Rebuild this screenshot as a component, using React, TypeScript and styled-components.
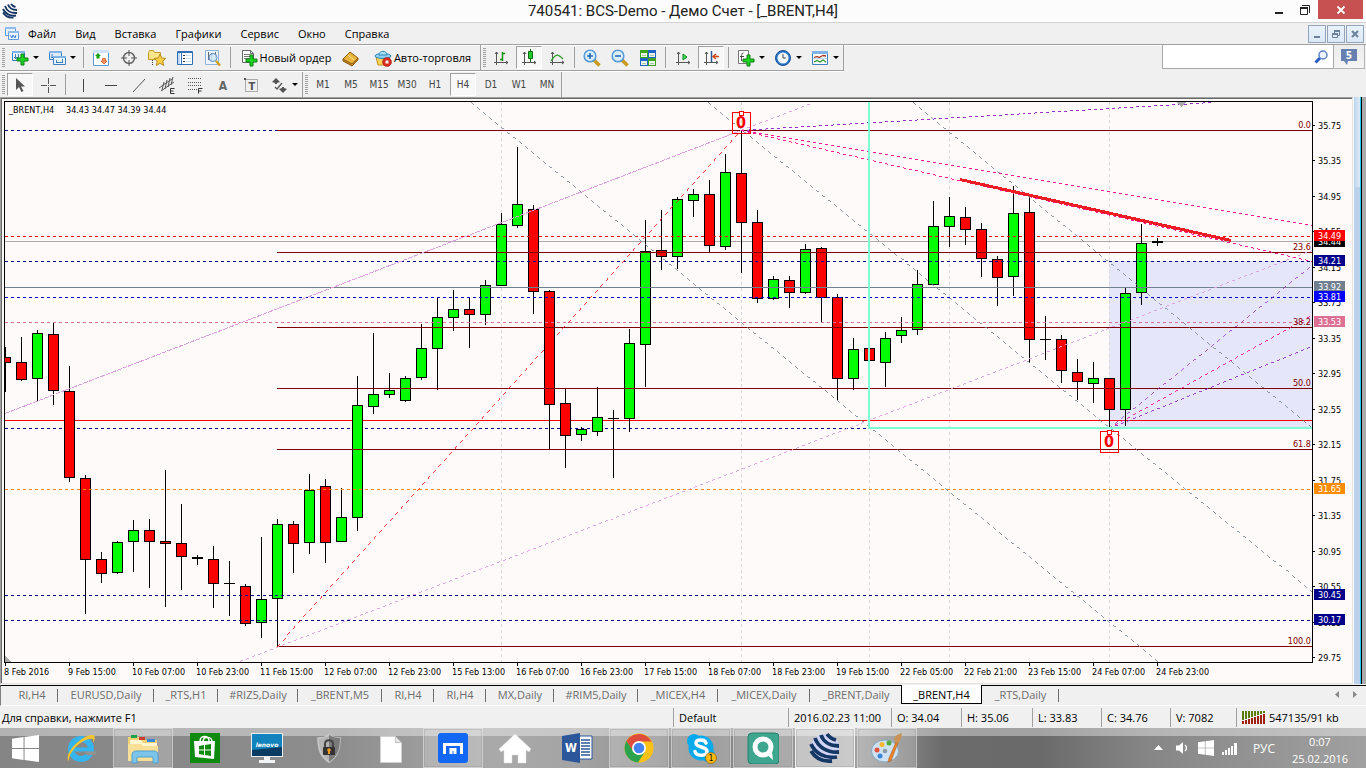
import React from 'react';
import styled, { createGlobalStyle, css } from 'styled-components';

const uiFont = '"Open Sans", "Noto Sans", sans-serif';
const titleFont = 'Roboto, "Open Sans", sans-serif';
const smallFont = '"DejaVu Sans Condensed", "DejaVu Sans", sans-serif';

const GlobalStyle = createGlobalStyle`
  * { box-sizing: border-box; }
  body { margin: 0; background: #f0f0f0; font-family: ${uiFont}; font-size: 11px; color: #000; }
  button, input { font: inherit; color: inherit; border: 0; padding: 0; margin: 0; background: none; border-radius: 0; }
  svg { display: block; flex: none; }
`;

/* ---------- chart data ---------- */

type Kind = 'u' | 'd' | 'x';
type Candle = [Kind, number, number, number, number];

const LEFT = 5;
const TOP = 102;
const STEP = 16;

/* kind, high, body top, body bottom, low */
const candles: Candle[] = [
  ['d', 347, 357, 363, 392], ['d', 337, 362, 380, 381], ['u', 330, 333, 379, 401], ['d', 323, 334, 391, 405],
  ['d', 366, 391, 478, 482], ['d', 475, 478, 560, 614], ['d', 552, 559, 574, 583], ['u', 541, 542, 573, 574],
  ['u', 520, 530, 542, 572], ['d', 519, 530, 542, 588], ['d', 470, 541, 544, 607], ['d', 504, 543, 557, 590],
  ['x', 555, 557, 559, 565], ['d', 546, 559, 584, 608], ['x', 561, 583, 584, 616], ['d', 584, 586, 624, 626],
  ['u', 537, 599, 623, 638], ['u', 519, 524, 599, 646], ['d', 521, 524, 544, 573], ['u', 474, 490, 543, 554],
  ['d', 479, 486, 543, 563], ['u', 488, 517, 542, 542], ['u', 376, 405, 518, 531], ['u', 333, 394, 407, 414],
  ['u', 373, 390, 395, 398], ['u', 376, 378, 401, 402], ['u', 324, 348, 378, 380], ['u', 298, 317, 349, 390],
  ['u', 290, 309, 318, 331], ['d', 297, 309, 315, 348], ['u', 280, 285, 315, 325], ['u', 213, 224, 286, 286],
  ['u', 147, 204, 226, 228], ['d', 205, 209, 292, 314], ['d', 290, 291, 405, 449], ['d', 389, 403, 436, 468],
  ['u', 427, 429, 435, 441], ['u', 387, 417, 432, 436], ['x', 410, 418, 419, 478], ['u', 329, 343, 419, 432],
  ['u', 220, 251, 345, 387], ['d', 210, 250, 257, 270], ['u', 197, 199, 257, 269], ['u', 189, 194, 201, 217],
  ['d', 180, 194, 246, 252], ['u', 154, 172, 247, 250], ['d', 131, 173, 223, 273], ['d', 210, 222, 299, 303],
  ['u', 276, 279, 299, 300], ['d', 276, 280, 293, 308], ['u', 244, 249, 293, 294], ['d', 247, 248, 298, 322],
  ['d', 294, 297, 379, 400], ['u', 338, 349, 379, 390], ['d', 348, 348, 361, 361], ['u', 332, 338, 363, 387],
  ['u', 317, 330, 336, 343], ['u', 270, 284, 330, 335], ['u', 201, 226, 285, 285], ['u', 197, 216, 227, 247],
  ['d', 207, 217, 230, 245], ['d', 223, 229, 259, 277], ['d', 256, 259, 278, 306], ['u', 186, 213, 277, 296],
  ['d', 196, 212, 340, 363], ['x', 316, 339, 340, 360], ['d', 335, 339, 371, 383], ['d', 359, 372, 382, 400],
  ['u', 362, 378, 384, 403], ['d', 378, 378, 410, 427], ['u', 288, 293, 410, 426], ['u', 224, 243, 293, 305],
  ['x', 238, 241, 243, 246],
];

const fibs: [number, string][] = [
  [130, '0.0'], [252, '23.6'], [327, '38.2'], [388, '50.0'], [449, '61.8'], [646, '100.0'],
];

const levels: [number, string][] = [
  [236, '#ff0000'], [261, '#00008b'], [297, '#0000cd'], [322, '#db7093'],
  [489, '#ff8c00'], [595, '#00008b'], [620, '#00008b'],
];

/* x1, y1, x2, y2, colour, dash length */
const rays: [number, number, number, number, string, number][] = [
  [240, 661, 1312, 250, '#dda0dd', 3.2],
  [741, 130, 811, 103, '#dda0dd', 3.2],
  [277, 646, 741, 130, '#ff0000', 4.03],
  [471, 102, 1158, 661, '#708090', 3.87],
  [708, 102, 1312, 591, '#708090', 3.87],
  [913, 102, 1312, 427, '#708090', 3.87],
  [741, 130, 1212, 102, '#9932cc', 3],
  [741, 130, 1312, 225, '#ff1493', 3.04],
  [741, 130, 1312, 261, '#ff1493', 3.08],
  [1109, 428, 1312, 265, '#9932cc', 3.85],
  [1109, 428, 1312, 315, '#ff1493', 3.43],
  [1109, 428, 1312, 346, '#9932cc', 3.24],
];

const priceTicks = Array.from({ length: 16 }, (_, i) => ({
  y: Math.round(125 + i * 35.47),
  label: (35.75 - i * 0.4).toFixed(2),
}));

const priceTags: [number, string, string][] = [
  [242, '#000000', '34.44'], [236, '#ff0000', '34.49'], [261, '#00008b', '34.21'], [287, '#708090', '33.92'],
  [297, '#0000ff', '33.81'], [322, '#db7093', '33.53'], [489, '#ff8c00', '31.65'], [595, '#00008b', '30.45'],
  [620, '#00008b', '30.17'],
];

const times = [
  '8 Feb 2016', '9 Feb 15:00', '10 Feb 07:00', '10 Feb 23:00', '11 Feb 15:00', '12 Feb 07:00', '12 Feb 23:00',
  '15 Feb 13:00', '16 Feb 07:00', '16 Feb 23:00', '17 Feb 15:00', '18 Feb 07:00', '18 Feb 23:00', '19 Feb 15:00',
  '22 Feb 05:00', '22 Feb 21:00', '23 Feb 15:00', '24 Feb 07:00', '24 Feb 23:00',
];

const tabs: [string, number][] = [
  ['RI,H4', 52], ['EURUSD,Daily', 96], ['_RTS,H1', 64], ['#RIZ5,Daily', 80], ['_BRENT,M5', 84], ['RI,H4', 52],
  ['RI,H4', 52], ['MX,Daily', 68], ['#RIM5,Daily', 84], ['_MICEX,H4', 80], ['_MICEX,Daily', 92],
  ['_BRENT,Daily', 92], ['_BRENT,H4', 80], ['_RTS,Daily', 77],
];
const ACTIVE_TAB = 12;

/* ---------- layout ---------- */

const Page = styled.div`
  display: flex;
  flex-direction: column;
  min-height: 100vh;
  background: #f0f0f0;
`;

const TitleBar = styled.header`
  display: grid;
  grid-template-columns: 1fr auto 1fr;
  height: 23px;
  background: #fcfcfc;
  border-bottom: 1px solid #d2d2d2;
`;

const TitleIcon = styled.div`
  padding: 3px 0 0 2px;
`;

const Title = styled.h1`
  margin: 0;
  font-family: ${titleFont};
  font-size: 15px;
  font-weight: 400;
  line-height: 23px;
  color: #222;
`;

const WindowButtons = styled.div`
  display: flex;
  justify-content: flex-end;
  padding-right: 3px;
`;

const WindowButton = styled.button<{ $close?: boolean }>`
  display: flex;
  align-items: center;
  justify-content: center;
  width: ${p => (p.$close ? 45 : 26)}px;
  height: 19px;
  color: ${p => (p.$close ? '#fff' : '#222')};
  background: ${p => (p.$close ? '#c75050' : 'transparent')};
`;

const MenuBar = styled.nav`
  display: flex;
  align-items: center;
  height: 22px;
  padding: 0 2px 0 5px;
  border-bottom: 1px solid #a0a0a0;
  box-shadow: 0 1px 0 #fff;
`;

const MenuItems = styled.div`
  display: flex;
  flex: 1;
  gap: 19px;
  padding-left: 9px;
`;

const MenuItem = styled.button`
  line-height: 18px;
`;

const MdiButtons = styled.div`
  display: flex;
  gap: 1px;
`;

const MdiButton = styled.button`
  display: flex;
  align-items: center;
  justify-content: center;
  width: 18px;
  height: 18px;
  background: linear-gradient(#e9f2fc, #dbe8f7);
  border: 1px solid #93a5bb;
`;

const ToolRow = styled.div<{ $first?: boolean }>`
  display: flex;
  align-items: flex-start;
  height: ${p => (p.$first ? 27 : 25)}px;
`;

const Toolbar = styled.div<{ $ruled?: boolean }>`
  display: flex;
  align-items: center;
  height: ${p => (p.$ruled ? 26 : 25)}px;
  border-right: 1px solid #a0a0a0;
  ${p => p.$ruled && css`border-bottom: 1px solid #a0a0a0; box-shadow: 0 1px 0 #fff;`}
`;

const Grip = styled.i`
  width: 3px;
  height: 20px;
  margin: 0 1px 0 2px;
  background: repeating-linear-gradient(#a0a0a0 0 1px, #f0f0f0 1px 2px);
`;

const Rule = styled.i`
  width: 1px;
  height: 21px;
  margin: 0 3px;
  background: #a0a0a0;
`;

const ToolButton = styled.button<{ $w?: number; $pressed?: boolean }>`
  display: flex;
  align-items: center;
  justify-content: center;
  gap: ${p => (p.$w ? 2 : 0)}px;
  width: ${p => p.$w ?? 28}px;
  height: 23px;
  white-space: nowrap;
  ${p => p.$pressed && css`
    width: 26px;
    margin: 0 1px;
    background: #f8f8f8;
    border: 1px solid;
    border-color: #a0a0a0 #fff #fff #a0a0a0;
  `}
`;

const FrameButton = styled(ToolButton)`
  font-family: ${smallFont};
  font-size: 10px;
  color: #444;
`;

const Caret = styled.i`
  border: 3px solid transparent;
  border-top-color: #000;
  border-bottom: 0;
  margin-left: 2px;
`;

const Search = styled.label`
  display: flex;
  align-items: center;
  width: 172px;
  height: 24px;
  margin-left: auto;
  padding-right: 5px;
  background: #fff;
  border: solid #a8a8a8;
  border-width: 0 1px 1px 1px;
`;

const SearchInput = styled.input`
  flex: 1;
  min-width: 0;
  padding: 0 4px;
  outline: 0;
`;

const MessageButton = styled.button`
  display: flex;
  align-items: center;
  justify-content: center;
  width: 31px;
  height: 24px;
  margin-right: 1px;
  background: linear-gradient(#ececec, #f4f4f4);
  border: solid #b5b5b5;
  border-width: 0 1px 1px 0;
`;

const Workspace = styled.main`
  display: flex;
  flex: 1;
  min-height: 300px;
`;

const Frame = styled.section`
  display: flex;
  flex: 1;
  flex-direction: column;
  min-width: 0;
  background: #fffafa;
  border: 1px solid #a0a0a0;
  border-right-color: #e3e3e3;
  border-bottom-color: #e3e3e3;
`;

const FrameInner = styled.div`
  display: flex;
  flex: 1;
  flex-direction: column;
  padding: 2px 0 0 2px;
  border: solid #696969;
  border-width: 1px 0 0 1px;
`;

const PlotRow = styled.div`
  display: flex;
  flex: 1;
`;

const Plot = styled.div`
  display: flex;
  flex: 1;
  min-width: 0;
  overflow: hidden;
  border: 1px solid #000;
`;

const PriceAxis = styled.div`
  width: 39px;

  svg { overflow: visible; }
`;

const TimeAxis = styled.div`
  height: 20px;
  overflow: hidden;
`;

const EdgeStrip = styled.div`
  width: 13px;
  background: linear-gradient(90deg, #fff 0 1px, #b9d1ea 1px 7px, #28c8f0 7px 8px, #000 8px 9px, #ababab 9px);
`;

const EdgeThumb = styled.div`
  width: 5px;
  height: 90px;
  margin-left: 2px;
  background: linear-gradient(90deg, #c3daf2, #dce9f8);
`;

const TabBar = styled.nav`
  display: flex;
  height: 21px;
  margin-top: 1px;
  padding-left: 5px;
  border-top: 1px solid #000;
  border-bottom: 1px solid #fff;
  border-left: 1px solid #808080;
`;

const Tab = styled.button<{ $w: number; $active: boolean }>`
  display: flex;
  justify-content: center;
  width: ${p => p.$w}px;
  height: 18px;
  line-height: 18px;
  color: #6d6d6d;
  white-space: nowrap;
  background: linear-gradient(#6d6d6d, #6d6d6d) right 3px / 1px 13px no-repeat;
  ${p => p.$active && css`
    color: #000;
    height: 19px;
    margin: -1px 0 0 -1px;
    width: ${p.$w + 1}px;
    line-height: 20px;
    background: #fff;
    border: solid #000;
    border-width: 0 1px 1px 1px;
  `}
`;

const TabArrows = styled.div`
  display: flex;
  gap: 13px;
  margin-left: auto;
  padding: 5px 8px 0 0;
`;

const StatusBar = styled.footer`
  display: flex;
  align-items: center;
  height: 22px;
  padding-top: 1px;
  padding-left: 2px;
`;

const StatusCell = styled.div<{ $w?: number }>`
  display: flex;
  align-items: center;
  gap: 4px;
  height: 19px;
  white-space: nowrap;
  ${p => (p.$w ? css`width: ${p.$w}px; padding-left: 5px; border-left: 1px solid #a0a0a0;` : css`flex: 1;`)}
`;

const Taskbar = styled.footer`
  display: flex;
  height: 40px;
  background:
    linear-gradient(rgba(255, 255, 255, 0.38) 0 8px, transparent 8px),
    linear-gradient(90deg, #858585 0, #8d8d8d 25%, #a9a9a9 36%, #a4a4a4 42%, #858585 52%, #a0a0a0 63%, #6b6b6b 69%, #6a6a6a 76%, #868686 84%, #a0a0a0 100%);
`;

const TaskButton = styled.button<{ $open?: boolean; $active?: boolean; $start?: boolean }>`
  display: flex;
  align-items: center;
  justify-content: center;
  width: ${p => (p.$start ? 50 : p.$open ? 60 : 62)}px;
  margin: ${p => (p.$open ? '0 1px' : '0')};
  height: 40px;
  ${p => p.$open && css`
    background: rgba(255, 255, 255, 0.22);
    border: 1px solid rgba(225, 225, 225, 0.55);
    box-shadow: inset 0 0 0 1px rgba(130, 130, 130, 0.25);
  `}
  ${p => p.$active && css`
    background: rgba(255, 255, 255, 0.45);
    border-color: #f2f2f2;
  `}
`;

const Tray = styled.div`
  display: flex;
  align-items: center;
  margin-left: auto;
  padding-right: 17px;
  color: #fff;
`;

const TrayItem = styled.button<{ $w: number }>`
  display: flex;
  justify-content: center;
  width: ${p => p.$w}px;
  font-size: 12px;
`;

const Clock = styled.time`
  width: 58px;
  margin-left: 5px;
  padding-top: 3px;
  line-height: 17px;
  text-align: center;
  white-space: nowrap;
`;

/* ---------- small icons ---------- */

const Plus = ({ x, y }: { x: number; y: number }) => (
  <path
    transform={`translate(${x} ${y})`}
    d="M4 0h3v4h4v3H7v4H4V7H0V4h4z"
    fill="#1fd61f"
    stroke="#0a7d12"
  />
);

const Axes = () => (
  <path d="M4.500 3v13M2 13.500h14M3 5l1.500-2L6 5M14 12l2 1.500-2 1.500" fill="none" stroke="#555" />
);

const icons: Record<string, React.ReactNode> = {
  newChart: <><path d="M1.500 2.500h12v9h-12z" fill="#eaf4ff" stroke="#3f7fbf" /><path d="M1 2h13v2H1z" fill="#7fb2e6" /><path d="M4.500 5v5M3 8.500h5M7.500 5v3" stroke="#3f7fbf" /><Plus x={6} y={5} /></>,
  profiles: <><path d="M1.500 2.500h12v8h-12z" fill="#dcecfb" stroke="#3f7fbf" /><path d="M1 2h13v2H1z" fill="#7fb2e6" /><path d="M5.500 7.500h12v8h-12z" fill="#eaf4ff" stroke="#3f7fbf" /><path d="M5 7h13v2H5z" fill="#7fb2e6" /><path d="M4 5v4M3 8.500h2M8 13.500h7M8.500 11v3M14.500 10v4" stroke="#3f7fbf" /></>,
  market: <><path d="M1.500 1.500h15v15h-15z" fill="#fff" stroke="#5a9bd5" /><path d="M1 1h16v3H1z" fill="#cfe4fa" /><path d="M6 4l3 3H7.500v2.500h-3V7H3z" fill="#12a012" /><path d="M12 15l-3-3h1.500V9.500h3V12H15z" fill="#f9905a" stroke="#d8501c" strokeWidth=".7" /></>,
  crosshair: <><circle cx="9" cy="9" r="5.500" fill="none" stroke="#666" strokeWidth="1.500" /><path d="M9 1v6M9 11v6M1 9h6M11 9h6" stroke="#555" /></>,
  navigator: <><path d="M.5 3.500l1-2h4l1 2h6v7H.5z" fill="#fbe58a" stroke="#c39a2b" /><path d="M4.500 11v5" stroke="#444" strokeDasharray="1 1" /><path d="M12 5l1.800 4 4 .4-3 2.800.9 4.300-3.700-2.200-3.700 2.200.9-4.300-3-2.800 4-.4z" fill="#f9cf45" stroke="#b98d1c" /></>,
  terminal: <><rect x="1" y="2" width="16" height="14" rx="1" fill="#2f6fb5" /><path d="M6 4h10v11H6z" fill="#fff" /><path d="M2 4h2v11H2z" fill="#bcd8f5" /><path d="M4.500 4v11" stroke="#fff" /><path d="M7 6.500h2M7 9.500h2M7 12.500h2" stroke="#333" /><path d="M10 6.500h5M10 9.500h5M10 12.500h5" stroke="#cfe0f2" /></>,
  tester: <><path d="M1.500 1.500h13v14h-13z" fill="#eef6fd" stroke="#8eb4d8" /><path d="M4.500 3v8M7.500 4v7M11.500 3v6" stroke="#667" /><circle cx="9" cy="8.500" r="4" fill="#cfe8fa" fillOpacity=".85" stroke="#5a8fc0" /><path d="M12 12l4 4.500" stroke="#d7a022" strokeWidth="2.500" /></>,
  order: <><path d="M2.500 1.500h8l3 3v9h-11z" fill="#fff" stroke="#666" /><path d="M4 5.500h6M4 7.500h7M4 9.500h5" stroke="#777" /><path d="M10.500 1.500v3h3" fill="none" stroke="#666" /><Plus x={6} y={6} /></>,
  book: <><path d="M1 10l7-7 8 6-6 7z" fill="#e9b53c" stroke="#8c5c12" /><path d="M1 10v2l9 5 6-6V9l-6 6z" fill="#c98b25" stroke="#8c5c12" /><path d="M6 6l6 5" stroke="#fbe19a" /></>,
  auto: <><path d="M2 8l2 8h9l3-8z" fill="#f8d55a" stroke="#c09020" /><ellipse cx="9" cy="7" rx="8" ry="2.500" fill="#8ccff0" stroke="#2f86b5" /><path d="M5 6c0-5 8-5 8 0z" fill="#a8ddf6" stroke="#2f86b5" /><circle cx="13" cy="13" r="4.500" fill="#d8291c" stroke="#9a140c" strokeWidth=".5" /><path d="M11.500 11.500h3v3h-3z" fill="#fff" /></>,
  bars: <><Axes /><path d="M10.500 3v9M8 10.500h2M11 4.500h2" stroke="#159015" strokeWidth="1.500" /></>,
  candle: <><Axes /><path d="M10.500 0v13" stroke="#0a6d0a" /><path d="M8.500 2.500h4v7h-4z" fill="#22cc33" stroke="#0a6d0a" /></>,
  line: <><Axes /><path d="M3 12c5-8 7-7 12-2" fill="none" stroke="#2a9a2a" strokeWidth="1.300" /></>,
  zoomIn: <><path d="M11 11l5.500 5.500" stroke="#c99a22" strokeWidth="3.500" /><circle cx="7" cy="7" r="5.800" fill="#d9effc" stroke="#5b9bd5" strokeWidth="1.600" /><path d="M7 4v6M4 7h6" stroke="#2268b8" strokeWidth="1.600" /></>,
  zoomOut: <><path d="M11 11l5.500 5.500" stroke="#c99a22" strokeWidth="3.500" /><circle cx="7" cy="7" r="5.800" fill="#d9effc" stroke="#5b9bd5" strokeWidth="1.600" /><path d="M4 7h6" stroke="#2268b8" strokeWidth="1.600" /></>,
  tile: <><path d="M1 1h8v8H1zM9 9h8v8H9z" fill="#3da31c" /><path d="M9 1h8v8H9zM1 9h8v8H1z" fill="#1e63c8" /><path d="M2 4h6v4H2zM10 4h6v4h-6zM2 12h6v4H2zM10 12h6v4h-6z" fill="#e8f3ea" /><path d="M3 6.500h4M11 6.500h4M3 14.500h4M11 14.500h4" stroke="#a8c8a8" /></>,
  scroll: <><Axes /><path d="M9 5l4 3-4 3z" fill="#3ddc4e" stroke="#0c8a1a" /></>,
  shift: <><Axes /><path d="M9.500 2v11" stroke="#2a5b9a" strokeWidth="1.500" /><path d="M17 7.500h-5M14 5l-3 2.500 3 2.500" fill="none" stroke="#d0491c" strokeWidth="1.500" /></>,
  indicators: <><path d="M1.500 1.500h10v13h-10z" fill="#fff" stroke="#777" /><path d="M6.500 4c-2 0-2 1-2 8M3 7.500h4" fill="none" stroke="#444" /><Plus x={6} y={6} /></>,
  periods: <><circle cx="9" cy="9" r="7.500" fill="#2a78c8" stroke="#174f94" /><circle cx="9" cy="9" r="5.500" fill="#f3f8fd" /><path d="M9 5v4h3" fill="none" stroke="#444" /></>,
  templates: <><path d="M1.500 2.500h15v13h-15z" fill="#fff" stroke="#3f7fbf" /><path d="M1 2h16v3H1z" fill="#7fb2e6" /><path d="M3 8.500l3-1 2 1 4-2 3 .5" fill="none" stroke="#a33620" strokeWidth="1.300" /><path d="M3 13l3-1.500 3 1.500 3-2 3 2" fill="none" stroke="#2f9a2f" strokeWidth="1.300" /><path d="M2 9.500h14" stroke="#b8d4ee" /></>,
  cursor: <path d="M5 2v12l3-3 2.500 5 2-1L10 10.500h4z" fill="#555" />,
  cross: <path d="M9.500 2v6M9.500 11v6M2 9.500h6M11 9.500h6M9 9.500h1" stroke="#555" />,
  vline: <path d="M9.500 3v13" stroke="#444" />,
  hline: <path d="M3 9.500h12" stroke="#444" />,
  trend: <path d="M3 16L15 3" stroke="#555" />,
  channel: <><path d="M1 12L14 3M3 15L16 6M4 14L6 6M7 13L9 4M10 11l2-9M13 9l2-8" fill="none" stroke="#555" /><path d="M16.500 12.500h-4v5h4M12.500 15h3" fill="none" stroke="#333" /></>,
  fib: <><path d="M2 2.500h14M2 6.500h14M2 9.500h14M2 13.500h9" stroke="#555" strokeDasharray="1 1" /><path d="M16.500 12.500h-4v5M12.500 15h3" fill="none" stroke="#333" /></>,
  textA: <text x="9" y="14" textAnchor="middle" fontFamily={smallFont} fontSize="12" fontWeight="700" fill="#666">A</text>,
  label: <><path d="M3.500 3.500h12v12h-12z" fill="none" stroke="#666" strokeDasharray="1 1" /><path d="M2 2h2v2H2z" fill="#555" /><text x="10" y="14" textAnchor="middle" fontFamily={smallFont} fontSize="11" fontWeight="700" fill="#555">T</text></>,
  shapes: <><path d="M2 6l4-4 4 4-3 1v1H5V7z" fill="#555" /><path d="M9 13l3-1v-1h2v1l3 1-4 4z" fill="#555" /><path d="M5 11l2 2 5-6" fill="none" stroke="#555" strokeWidth="1.200" /></>,
};

const Icon = ({ name }: { name: string }) => (
  <svg width="18" height="18" viewBox="0 0 18 18" aria-hidden="true">{icons[name]}</svg>
);

const Globe = ({ size, pale }: { size: number; pale?: boolean }) => (
  <svg width={size} height={size} viewBox="0 0 32 32" aria-hidden="true">
    {pale && <circle cx="16" cy="16" r="14" fill="#d3d5f7" />}
    <g fill="none" stroke="#143764" strokeWidth="3.800">
      <path d="M12 3c2 6 8 11 18 11" />
      <path d="M6 6c3 9 12 15 24 14" />
      <path d="M2 12c4 9 14 15 26 13" />
      <path d="M2 19c5 8 12 11 21 10" />
      <path d="M18 2c2 3 5 5 9 6" />
    </g>
  </svg>
);

/* ---------- taskbar pictures ---------- */

const WinLogo = ({ size }: { size: number }) => (
  <svg width={size} height={size} viewBox="0 0 28 28" aria-hidden="true">
    <path d="M0 4l12-2v11.500H0zM13 2l15-2v13.500H13zM0 14.500h12V26L0 24zM13 14.500h15V28l-15-2z" fill="#fff" />
  </svg>
);

const taskIcons: { name: string; open?: boolean; active?: boolean; art: React.ReactNode }[] = [
  { name: 'Internet Explorer', art: <><circle cx="16" cy="17" r="10" fill="none" stroke="#35b4ee" strokeWidth="6" /><path d="M8 17.500h19" stroke="#35b4ee" strokeWidth="4" /><path d="M19 19.500h12v3l-9 1z" fill="#939393" /><path d="M4 29C-2 24 14 4 27 3c4 0 3 5 1 8 1-4 0-5-4-4C14 9 3 22 4 29z" fill="#f8c52c" /></> },
  { name: 'Explorer', open: true, art: <><path d="M1 5h12l2 3h15v21H1z" fill="#f3d373" /><path d="M4 3h6v3H4z" fill="#22a04a" /><path d="M12 5h6v3h-6z" fill="#c8402c" /><path d="M20 7h8v3h-8z" fill="#3a86d8" /><path d="M3 8h11l2 3h14v4H3z" fill="#fff6d0" /><path d="M1 12h13l2 2h15v15H1z" fill="#f7e096" /><path d="M5 31v-8c0-3 2-4 4-4h18c2 0 4 1 4 4v8h-5v-6H10v6z" fill="#7cc4ea" stroke="#4fa0cf" /></> },
  { name: 'Store', art: <><path d="M1 1h30v30H1z" fill="#0e8a0e" /><path d="M11 9c0-6 9-6 9 0M14 9c1-5 9-5 9 1" fill="none" stroke="#fff" strokeWidth="1.500" /><path d="M5 9h21l-1 18-19-2z" fill="#fff" /><path d="M10 14l5-1v4.500h-5zM16 13l6-1v5.500h-6zM10 18.500h5V23l-5-1zM16 18.500h6V24l-6-1z" fill="#0e8a0e" /></> },
  { name: 'Lenovo', art: <><path d="M0 1h32v24H0z" fill="#e9eef2" /><path d="M1 2h30v17H1z" fill="#1283bd" /><path d="M1 18l30-3v9H1z" fill="#083c63" /><text x="16" y="15" textAnchor="middle" fontFamily='"DejaVu Sans", sans-serif' fontSize="6" fontWeight="700" fontStyle="italic" fill="#fff">lenovo</text><path d="M13 25h6v3h5v3H8v-3h5z" fill="#f1f3f4" /></> },
  { name: 'Security', art: <><path d="M16 3c3 2 7 3 11 3 0 12-3 19-11 24C8 25 5 18 5 6c4 0 8-1 11-3z" fill="#b4b4b4" stroke="#c9c9c9" strokeWidth="1.500" /><path d="M16 3c3 2 7 3 11 3 0 12-3 19-11 24z" fill="#7a7a7a" /><path d="M12 15v-3c0-5 8-5 8 0v3" fill="none" stroke="#444" strokeWidth="2" /><rect x="10" y="15" width="12" height="8" rx="1" fill="#333" /><circle cx="16" cy="18" r="1.800" fill="#f59a23" /><path d="M15 18h2v4h-2z" fill="#f59a23" /></> },
  { name: 'Document', art: <><path d="M5.500 4.500h15l6 6v20h-21z" fill="#fff" stroke="#d0d0d0" /><path d="M20.500 4.500v6h6z" fill="#e8e8e8" stroke="#c4c4c4" /></> },
  { name: 'Maxthon', open: true, art: <><rect x="1" y="1" width="30" height="30" rx="3" fill="#1267f5" /><path d="M7.500 22V12.500h17V22M14 22v-4.500h4V22" fill="none" stroke="#fff" strokeWidth="3" /></> },
  { name: 'Home', art: <path d="M16 2L0 17l2 3 3-2v13h8v-8h6v8h8V18l3 2 2-3z" fill="#fff" stroke="#ddd" strokeWidth=".5" /> },
  { name: 'Word', art: <><path d="M16 4h15v23H16z" fill="#fff" stroke="#2b579a" /><path d="M20 8h9M20 11h9M20 14h9M20 17h9M20 20h9M20 23h9" stroke="#2b579a" strokeWidth="1.300" /><path d="M1 4l18-3v30L1 28z" fill="#2b579a" /><text x="10" y="20" textAnchor="middle" fontFamily='"DejaVu Sans Condensed", sans-serif' fontSize="12" fontWeight="700" fill="#fff">W</text></> },
  { name: 'Chrome', open: true, art: <><circle cx="16" cy="16" r="14.500" fill="#fbc116" /><path d="M3.500 8.700A14.500 14.500 0 0 0 15 30.500l7-11-12-1z" fill="#2ba24c" /><path d="M3.500 8.700A14.500 14.500 0 0 1 28.500 9.500H16L10 19z" fill="#de4c3c" /><circle cx="16" cy="16" r="7" fill="#fff" /><circle cx="16" cy="16" r="5.300" fill="#4382f0" /></> },
  { name: 'Skype', open: true, art: <><circle cx="16" cy="16" r="12.500" fill="#06aaec" /><circle cx="9" cy="9" r="7" fill="#06aaec" /><circle cx="23" cy="23" r="7" fill="#06aaec" /><path d="M21 11c-1-4-10-4-10 0 0 5 11 3 11 8.500 0 5-11 5-12 0" fill="none" stroke="#fff" strokeWidth="3.500" strokeLinecap="round" /><circle cx="26" cy="26" r="5.500" fill="#fdb813" stroke="#8a6408" strokeWidth=".7" /><text x="26" y="29" textAnchor="middle" fontFamily={smallFont} fontSize="8" fill="#000">1</text></> },
  { name: 'QIP', open: true, art: <><rect x="1" y="1" width="31" height="31" rx="4" fill="#3ea58f" stroke="#25806c" /><circle cx="16" cy="15" r="8" fill="none" stroke="#fff" strokeWidth="5" /><path d="M17 20h8l1 8z" fill="#fff" /></> },
  { name: 'MetaTrader', open: true, active: true, art: null },
  { name: 'Paint', open: true, art: <><ellipse cx="14" cy="19" rx="13.500" ry="11" fill="#cfe2f2" stroke="#88a9c4" /><circle cx="6" cy="18" r="2.500" fill="#e0523c" /><circle cx="11" cy="12.500" r="2.500" fill="#f5b52c" /><circle cx="18" cy="11" r="2.500" fill="#52ab3c" /><circle cx="9" cy="24" r="2.500" fill="#3a86d8" /><circle cx="14" cy="19" r="2.300" fill="#8c9aa6" /><path d="M25 10l2 1-7 18-3 1 1-4z" fill="#e8842c" stroke="#a8561a" strokeWidth=".5" /><path d="M24 10c-2-4 0-7 7-9-1 6-2 9-4 10z" fill="#c99258" /></> },
];

/* ---------- chart ---------- */

const Marker = ({ x, y }: { x: number; y: number }) => (
  <g>
    <rect x={x - 8.5} y={y + 1.5} width="18" height="21" fill="none" stroke="#ff0000" shapeRendering="crispEdges" />
    <text x={x} y={y + 17} textAnchor="middle" fontFamily='"DejaVu Sans Condensed", sans-serif' fontSize="16" fontWeight="700" fill="#ff0000">0</text>
    <rect x={x - 1.5} y={y + 0.5} width="4" height="4" fill="#fff" stroke="#ff0000" shapeRendering="crispEdges" />
  </g>
);

const bodyFill = { u: '#00ff00', d: '#ff0000', x: '#000000' };

const CandleShape = ({ index, candle }: { index: number; candle: Candle }) => {
  const [kind, high, top, bottom, low] = candle;
  const x = LEFT + index * STEP;
  return (
    <g shapeRendering="crispEdges">
      <rect x={x} y={high} width="1" height={low - high} />
      <rect x={x - 5} y={top} width="11" height={bottom - top} />
      {kind !== 'x' && (
        <rect x={x - 4} y={top + 1} width="9" height={bottom - top - 2} fill={bodyFill[kind]} />
      )}
    </g>
  );
};

/* stroke width that covers one pixel per column (or row) on a slanted line */
const hairline = (dx: number, dy: number) =>
  Math.max(Math.abs(dx), Math.abs(dy)) / Math.hypot(dx, dy);

const Chart = () => (
  <svg width="100%" height="100%" role="img" aria-label="_BRENT,H4">
    <g transform={`translate(${-LEFT} ${-TOP})`} shapeRendering="crispEdges">
      <rect x="1109" y="261" width="3000" height="167" fill="#e6e6fa" />
      {[501, 741, 869, 949, 1109].map(x => (
        <line key={x} x1={x + 0.5} x2={x + 0.5} y1={TOP} y2="3000" stroke="#d9d9d9" strokeDasharray="3 3" />
      ))}
      <line x1={LEFT} x2="4000" y1="241.5" y2="241.5" stroke="#b0a8a8" />
      <line x1={LEFT} x2="4000" y1="420.5" y2="420.5" stroke="#ff0000" />
      <line x1={LEFT} x2="868" y1="428.5" y2="428.5" stroke="#00008b" strokeDasharray="3 3" />
      {candles.map((c, i) => <CandleShape key={i} index={i} candle={c} />)}
      <line x1={LEFT} x2="277" y1="130.5" y2="130.5" stroke="#00008b" strokeDasharray="3 3" />
      {levels.map(([y, color]) => (
        <line key={y} x1={LEFT} x2="4000" y1={y + 0.5} y2={y + 0.5} stroke={color} strokeDasharray="3 3" />
      ))}
      <line x1={LEFT} x2="4000" y1="287.5" y2="287.5" stroke="#708090" />
      {fibs.map(([y]) => (
        <line key={y} x1="277" x2="4000" y1={y + 0.5} y2={y + 0.5} stroke="#800000" />
      ))}
      <line x1={LEFT} y1="413.500" x2="741" y2="130.500" stroke="#dda0dd" strokeDasharray="5 1" />
      {rays.map(([x1, y1, x2, y2, color, dash], i) => (
        <line
          key={i}
          x1={x1}
          y1={y1 + 0.5}
          x2={x2}
          y2={y2 + 0.5}
          stroke={color}
          strokeWidth={hairline(x2 - x1, y2 - y1)}
          strokeDasharray={`${dash} ${dash}`}
        />
      ))}
      <path d="M869 102V428H4000" fill="none" stroke="#7fffd4" strokeWidth="2" />
      <line x1="960" y1="179.500" x2="1231" y2="240.500" stroke="#ed1c24" strokeWidth="3" />
      <path d="M1176 102h10l-5 5z" fill="#a9a9a9" />
      <path d="M5 656v6h6z" fill="#a9a9a9" />
      <Marker x={741} y={111} />
      <Marker x={1109} y={430} />
    </g>
    <g fontFamily={smallFont} fontSize="9">
      <text x="4" y="11">_BRENT,H4</text>
      <text x="61" y="11">34.43 34.47 34.39 34.44</text>
      {fibs.map(([y, label]) => (
        <text key={label} x="100%" dx="-1" y={y - TOP - 2} textAnchor="end" fill="#800000">{label}</text>
      ))}
    </g>
  </svg>
);

const PriceScale = () => (
  <svg width="39" height="100%" fontFamily={smallFont} fontSize="9">
    {priceTicks.map(t => (
      <g key={t.label}>
        <rect x="0" y={t.y - TOP + 1} width="2" height="1" />
        <text x="5" y={t.y - TOP + 5}>{t.label}</text>
      </g>
    ))}
    {priceTags.map(([y, color, label]) => (
      <g key={label}>
        <rect x="1" y={y - TOP - 5} width="31" height="11" fill={color} />
        <text x="5" y={y - TOP + 4} fill="#fff">{label}</text>
      </g>
    ))}
  </svg>
);

const TimeScale = () => (
  <svg width="100%" height="20" fontFamily={smallFont} fontSize="9">
    {times.map((t, i) => (
      <g key={t}>
        <rect x={1 + i * 64} y="0" width="1" height="3" />
        <text x={i * 64} y="12">{t}</text>
      </g>
    ))}
  </svg>
);

const SmallTool = ({ name, label, pressed }: { name: string; label: string; pressed?: boolean }) => (
  <ToolButton $pressed={pressed} aria-label={label}><Icon name={name} /></ToolButton>
);

const DropTool = ({ name, label }: { name: string; label: string }) => (
  <ToolButton $w={37} aria-label={label}><Icon name={name} /><Caret /></ToolButton>
);

export default function App() {
  return (
    <>
      <GlobalStyle />
      <Page>
        <TitleBar>
          <TitleIcon><Globe size={16} /></TitleIcon>
          <Title>740541: BCS-Demo - Демо Счет - [_BRENT,H4]</Title>
          <WindowButtons>
            <WindowButton aria-label="Свернуть">
              <svg width="10" height="12"><path d="M1 8h8v2H1z" fill="#222" /></svg>
            </WindowButton>
            <WindowButton aria-label="Восстановить">
              <svg width="12" height="12"><path d="M1.500 3.500h7v7h-7zM3 1.500h7.500V9" fill="none" stroke="#222" /><path d="M1 3h8v2H1z" fill="#222" /></svg>
            </WindowButton>
            <WindowButton $close aria-label="Закрыть">
              <svg width="10" height="10"><path d="M1.500 1.500l7 7M8.500 1.500l-7 7" stroke="#fff" strokeWidth="1.800" /></svg>
            </WindowButton>
          </WindowButtons>
        </TitleBar>

        <MenuBar>
          <svg width="14" height="15" aria-hidden="true">
            <path d="M.5 1.500h10v8H.5z" fill="#e6f1fd" stroke="#5b9ae0" />
            <path d="M3.500 5.500h10v8h-10z" fill="#eef6ff" stroke="#5b9ae0" />
            <path d="M0 1h11v2H0zM3 5h11v2H3z" fill="#8dbcf0" />
            <path d="M5 9l2 3 1-3 2 3 1-3" fill="none" stroke="#3f7fd0" />
          </svg>
          <MenuItems>
            {['Файл', 'Вид', 'Вставка', 'Графики', 'Сервис', 'Окно', 'Справка'].map(m => (
              <MenuItem key={m}>{m}</MenuItem>
            ))}
          </MenuItems>
          <MdiButtons>
            <MdiButton aria-label="Свернуть окно"><svg width="10" height="10"><path d="M2 7h6v2H2z" fill="#6d8097" /></svg></MdiButton>
            <MdiButton aria-label="Восстановить окно"><svg width="10" height="10"><path d="M1.500 4.500h5v4h-5zM3.500 4V1.500h5v5H7" fill="none" stroke="#6d8097" /><path d="M1 4h6v2H1zM3 1h6v2H3z" fill="#6d8097" /></svg></MdiButton>
            <MdiButton aria-label="Закрыть окно"><svg width="10" height="10"><path d="M2 2l6 6M8 2L2 8" stroke="#6d8097" strokeWidth="2" /></svg></MdiButton>
          </MdiButtons>
        </MenuBar>

        <ToolRow $first>
          <Toolbar $ruled>
            <Grip />
            <DropTool name="newChart" label="Новый график" />
            <DropTool name="profiles" label="Профили" />
            <Rule />
            <SmallTool name="market" label="Обзор рынка" />
            <SmallTool name="crosshair" label="Окно данных" />
            <SmallTool name="navigator" label="Навигатор" />
            <SmallTool name="terminal" label="Терминал" />
            <SmallTool name="tester" label="Тестер" />
            <Rule />
            <ToolButton $w={103}><Icon name="order" />Новый ордер</ToolButton>
            <SmallTool name="book" label="Редактор" />
            <ToolButton $w={115}><Icon name="auto" />Авто-торговля</ToolButton>
          </Toolbar>
          <Toolbar $ruled>
            <Grip />
            <SmallTool name="bars" label="Бары" />
            <SmallTool name="candle" label="Свечи" pressed />
            <SmallTool name="line" label="Линия" />
            <Rule />
            <SmallTool name="zoomIn" label="Приблизить" />
            <SmallTool name="zoomOut" label="Отдалить" />
            <SmallTool name="tile" label="Плитка" />
            <Rule />
            <SmallTool name="scroll" label="Автопрокрутка" />
            <SmallTool name="shift" label="Сдвиг" pressed />
            <Rule />
            <DropTool name="indicators" label="Индикаторы" />
            <DropTool name="periods" label="Периоды" />
            <DropTool name="templates" label="Шаблоны" />
          </Toolbar>
          <Search>
            <SearchInput type="text" aria-label="Поиск" />
            <svg width="14" height="14" aria-hidden="true">
              <path d="M6 8L1.500 12.500" stroke="#2a5ac8" strokeWidth="3" />
              <circle cx="9" cy="5" r="4" fill="#eef4fd" stroke="#5a82c8" strokeWidth="1.500" />
            </svg>
          </Search>
          <MessageButton aria-label="Сообщения">
            <svg width="16" height="16">
              <path d="M0 0h16v12H7l-1 4-3-4H0z" fill="#6580b0" />
              <text x="8" y="10" textAnchor="middle" fontFamily={smallFont} fontSize="10" fontWeight="700" fill="#fff">5</text>
            </svg>
          </MessageButton>
        </ToolRow>

        <ToolRow>
          <Toolbar>
            <Grip />
            <SmallTool name="cursor" label="Курсор" pressed />
            <SmallTool name="cross" label="Перекрестие" />
            <Rule />
            <SmallTool name="vline" label="Вертикальная линия" />
            <SmallTool name="hline" label="Горизонтальная линия" />
            <SmallTool name="trend" label="Трендовая линия" />
            <SmallTool name="channel" label="Канал" />
            <SmallTool name="fib" label="Фибоначчи" />
            <SmallTool name="textA" label="Текст" />
            <SmallTool name="label" label="Метка" />
            <DropTool name="shapes" label="Стрелки" />
          </Toolbar>
          <Toolbar>
            <Grip />
            {['M1', 'M5', 'M15', 'M30', 'H1', 'H4', 'D1', 'W1', 'MN'].map(f => (
              <FrameButton key={f} $pressed={f === 'H4'}>{f}</FrameButton>
            ))}
          </Toolbar>
        </ToolRow>

        <Workspace>
          <Frame>
            <FrameInner>
              <PlotRow>
                <Plot><Chart /></Plot>
                <PriceAxis><PriceScale /></PriceAxis>
              </PlotRow>
              <TimeAxis><TimeScale /></TimeAxis>
            </FrameInner>
          </Frame>
          <EdgeStrip><EdgeThumb /></EdgeStrip>
        </Workspace>

        <TabBar>
          {tabs.map(([label, w], i) => (
            <Tab key={i} $w={w} $active={i === ACTIVE_TAB}>{label}</Tab>
          ))}
          <TabArrows>
            <svg width="5" height="8"><path d="M4 0v7L0 3.500z" fill="#8a8a8a" /></svg>
            <svg width="5" height="8"><path d="M0 0v7l4-3.500z" fill="#8a8a8a" /></svg>
          </TabArrows>
        </TabBar>

        <StatusBar>
          <StatusCell>Для справки, нажмите F1</StatusCell>
          <StatusCell $w={115}>Default</StatusCell>
          <StatusCell $w={103}>2016.02.23 11:00</StatusCell>
          <StatusCell $w={70}>O: 34.04</StatusCell>
          <StatusCell $w={71}>H: 35.06</StatusCell>
          <StatusCell $w={69}>L: 33.83</StatusCell>
          <StatusCell $w={69}>C: 34.76</StatusCell>
          <StatusCell $w={66}>V: 7082</StatusCell>
          <StatusCell $w={130}>
            <svg width="23" height="14" shapeRendering="crispEdges" aria-hidden="true">
              {Array.from({ length: 8 }, (_, i) => (
                <g key={i}>
                  <rect x={i * 3} y="0" width="2" height={9 - i} fill="#5a7d0a" />
                  <rect x={i * 3} y={10 - i} width="2" height={3 + i} fill="#a02010" />
                </g>
              ))}
            </svg>
            547135/91 kb
          </StatusCell>
        </StatusBar>

        <Taskbar>
          <TaskButton $start aria-label="Пуск"><WinLogo size={27} /></TaskButton>
          {taskIcons.map(t => (
            <TaskButton key={t.name} $open={t.open} $active={t.active} aria-label={t.name}>
              {t.art ? <svg width="32" height="32" viewBox="0 0 32 32">{t.art}</svg> : <Globe size={32} pale />}
            </TaskButton>
          ))}
          <Tray>
            <TrayItem $w={24} aria-label="Скрытые значки"><svg width="9" height="6"><path d="M0 5l4.500-5L9 5z" fill="#fff" /></svg></TrayItem>
            <TrayItem $w={24} aria-label="Громкость">
              <svg width="14" height="14"><path d="M1 4.500h3L8 1v12L4 9.500H1z" fill="#fff" /><path d="M10 4c2 2 2 4 0 6" fill="none" stroke="#fff" strokeWidth="1.300" /></svg>
            </TrayItem>
            <TrayItem $w={24} aria-label="Windows"><WinLogo size={16} /></TrayItem>
            <TrayItem $w={24} aria-label="Сеть">
              <svg width="16" height="13"><path d="M0 10h2v3H0zM3 8h2v5H3zM6 6h2v7H6zM9 4h2v9H9zM12 1h3v12h-3z" fill="#fff" /></svg>
            </TrayItem>
            <TrayItem $w={44}>РУС</TrayItem>
            <Clock>0:07<br />25.02.2016</Clock>
          </Tray>
        </Taskbar>
      </Page>
    </>
  );
}
